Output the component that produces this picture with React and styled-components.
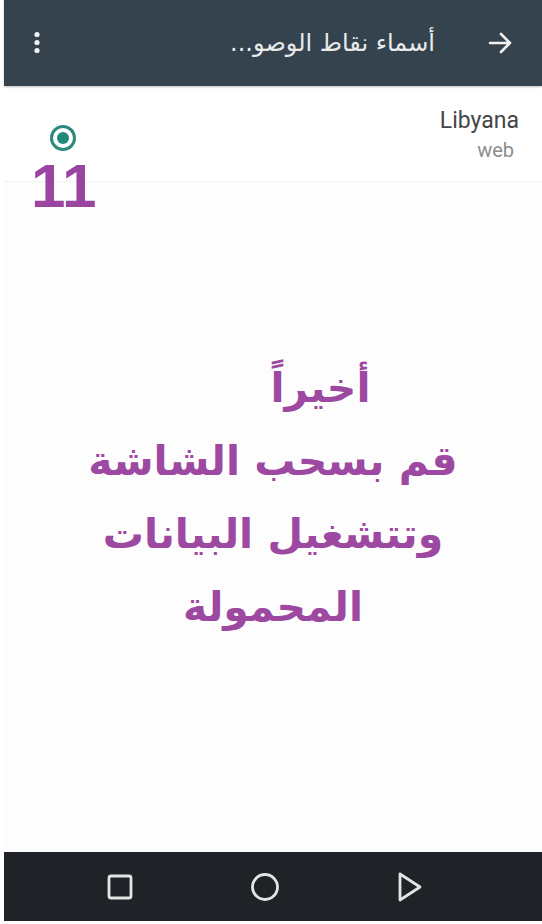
import styled, { createGlobalStyle } from "styled-components";

const GlobalStyle = createGlobalStyle`
body {
  margin: 0;
  background: #ffffff;
  font-family: Roboto, "DejaVu Sans", sans-serif;
}
`

const Page = styled.div`
position: relative;
display: flex;
flex-direction: column;
width: 542px;
height: 924px;
box-sizing: border-box;
padding-left: 4px;
padding-bottom: 3px;
background: #ffffff;
overflow: hidden;
`

const Toolbar = styled.div`
display: flex;
flex-direction: row;
align-items: center;
height: 86px;
background: #34434d;
color: #e8eaec;
padding: 0 28px 0 29px;
box-shadow: 0 1px 2px rgba(0, 0, 0, 0.25);
`

const Title = styled.div`
flex: 1;
direction: rtl;
text-align: right;
font-family: "DejaVu Sans", sans-serif;
font-size: 24px;
padding-right: 53px;
`

const ListRow = styled.div`
display: flex;
flex-direction: row;
justify-content: space-between;
height: 95px;
border-bottom: 1px solid #f1f1f1;
padding: 0 23px 0 46px;
`

const Radio = styled.div`
margin-top: 39px;
width: 20px;
height: 20px;
border-radius: 50%;
border: 3px solid #2b8a7c;
display: flex;
align-items: center;
justify-content: center;
`

const RadioDot = styled.div`
width: 12px;
height: 12px;
border-radius: 50%;
background: #1e8a79;
`

const Network = styled.div`
display: flex;
flex-direction: column;
align-items: flex-end;
padding-top: 22px;
`

const Name = styled.div`
font-size: 23px;
color: #454545;
line-height: 26px;
`

const Sub = styled.div`
font-size: 20px;
color: #8c8c8c;
line-height: 24px;
margin-top: 4px;
margin-right: 5px;
`

const Step = styled.div`
position: absolute;
left: 31px;
top: 151px;
font-family: "Liberation Sans", Arial, sans-serif;
font-weight: bold;
font-size: 62px;
color: #9a45a0;
line-height: 70px;
`

const Content = styled.div`
flex: 1;
background: #fdfdfd;
display: flex;
flex-direction: column;
align-items: center;
padding-top: 170px;
`

const Line = styled.div`
direction: rtl;
font-family: "DejaVu Sans", sans-serif;
font-weight: bold;
font-size: 41px;
line-height: 73px;
color: #9d48a1;
white-space: nowrap;
margin-left: ${p => p.shift || 0}px;
`

const NavBar = styled.div`
display: flex;
flex-direction: row;
align-items: center;
height: 69px;
background: #1f2226;
padding-left: 43px;
`

const NavSlot = styled.div`
width: 145px;
display: flex;
justify-content: center;
`

const Icon = styled.svg`
display: block;
`

export default function App() {
    return (
        <>
            <GlobalStyle />
            <Page>
                <Toolbar>
                    <Icon width="8" height="24" viewBox="0 0 8 24">
                        <circle cx="4" cy="3.5" r="2.6" fill="#f2f2f2" />
                        <circle cx="4" cy="11.5" r="2.6" fill="#f2f2f2" />
                        <circle cx="4" cy="19.5" r="2.6" fill="#f2f2f2" />
                    </Icon>
                    <Title>أسماء نقاط الوصو...</Title>
                    <Icon width="26" height="24" viewBox="0 0 26 24">
                        <path d="M2 12 H22 M13 3 L22 12 L13 21" stroke="#f2f2f2" strokeWidth="2.6" fill="none" strokeLinecap="round" strokeLinejoin="round" />
                    </Icon>
                </Toolbar>
                <ListRow>
                    <Radio><RadioDot /></Radio>
                    <Network>
                        <Name>Libyana</Name>
                        <Sub>web</Sub>
                    </Network>
                </ListRow>
                <Step>11</Step>
                <Content>
                    <Line shift={95}>أخيراً</Line>
                    <Line>قم بسحب الشاشة</Line>
                    <Line>وتتشغيل البيانات</Line>
                    <Line>المحمولة</Line>
                </Content>
                <NavBar>
                    <NavSlot>
                        <Icon width="26" height="26" viewBox="0 0 26 26">
                            <rect x="2" y="2" width="22" height="22" rx="2" stroke="#e4e4e4" strokeWidth="2.8" fill="none" />
                        </Icon>
                    </NavSlot>
                    <NavSlot>
                        <Icon width="30" height="30" viewBox="0 0 30 30">
                            <circle cx="15" cy="15" r="12.5" stroke="#e4e4e4" strokeWidth="2.8" fill="none" />
                        </Icon>
                    </NavSlot>
                    <NavSlot>
                        <Icon width="26" height="32" viewBox="0 0 26 32">
                            <path d="M3 3 L23 16 L3 29 Z" stroke="#e4e4e4" strokeWidth="2.8" fill="none" strokeLinejoin="round" />
                        </Icon>
                    </NavSlot>
                </NavBar>
            </Page>
        </>
    )
}
